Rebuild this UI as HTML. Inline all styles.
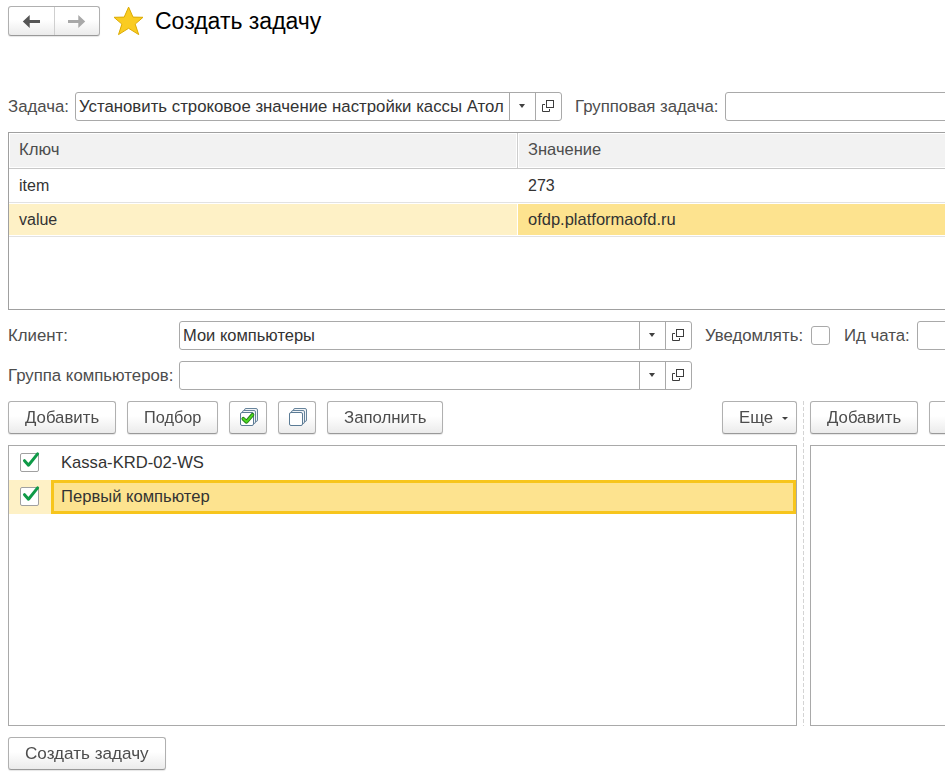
<!DOCTYPE html>
<html><head><meta charset="utf-8">
<style>
*{box-sizing:border-box;margin:0;padding:0}
html,body{width:945px;height:777px;overflow:hidden;background:#fff}
body{position:relative;font-family:"Liberation Sans",sans-serif;font-size:16.8px;color:#4d4d4d}
.a{position:absolute}
.t{position:absolute;white-space:nowrap;line-height:1}
.btn{position:absolute;border:1px solid #b0b0b0;border-bottom-color:#999;border-radius:3px;background:linear-gradient(#ffffff 0%,#ffffff 45%,#ebebeb 100%);box-shadow:0 1px 1px rgba(0,0,0,.1);color:#4d4d4d;white-space:nowrap}
.btn .t{top:8.4px;will-change:transform}
.inp{position:absolute;border:1px solid #a9a9a9;border-radius:3px;background:#fff}
.dd{position:absolute;top:0;bottom:0;border-left:1px solid #a9a9a9}
.tri{position:absolute;width:0;height:0;border-left:3px solid transparent;border-right:3px solid transparent;border-top:4px solid #404040}
.oi{position:absolute;top:7px}
.cb{position:absolute;width:19px;height:19px;border:1px solid #a0a0a0;border-radius:2px;background:#fff}
</style></head><body>

<!-- nav buttons -->
<div class="btn" style="left:8px;top:6px;width:92px;height:30px;"></div>
<div class="a" style="left:54px;top:7px;width:1px;height:28px;background:#cfcfcf"></div>
<svg class="a" style="left:22px;top:14px" width="20" height="15" viewBox="0 0 20 15">
  <path d="M0.8 7.5 L7.7 1.1 L7.7 6 L18 6 L18 9 L7.7 9 L7.7 13.9 Z" fill="#555"/>
</svg>
<svg class="a" style="left:67px;top:14px" width="20" height="15" viewBox="0 0 20 15">
  <path d="M18.2 7.5 L11.3 1.1 L11.3 6 L1 6 L1 9 L11.3 9 L11.3 13.9 Z" fill="#a8a8a8"/>
</svg>
<!-- star -->
<svg class="a" style="left:110px;top:4px" width="36" height="34" viewBox="0 0 36 34"><path d="M18.6 3.1 L23 13.1 L33 13.3 L25.2 20.1 L28.7 30.6 L18.6 24.3 L8.5 30.6 L11.9 20.1 L4 13.3 L14.2 13.1 Z" fill="#facc21" stroke="#dcab02" stroke-width="1" stroke-linejoin="miter"/></svg>
<div class="t" style="left:155px;top:10px;font-size:23px;color:#000">Создать задачу</div>

<!-- Задача row -->
<div class="t" style="left:8px;top:99px">Задача:</div>
<div class="inp" style="left:75px;top:92px;width:487px;height:29px">
  <div class="t" style="left:3px;top:6px;color:#333">Установить строковое значение настройки кассы Атол</div>
  <div class="dd" style="left:433px;width:27px"><div class="tri" style="left:9px;top:11px"></div></div>
  <div class="dd" style="left:459px;width:27px"></div>
  <svg class="oi" style="left:466px" width="13" height="13" viewBox="0 0 13 13"><rect x="4.5" y="0.5" width="7" height="7" fill="none" stroke="#3c3c3c"/><path d="M3 4.5 H0.5 V11.5 H7.5 V9" fill="none" stroke="#3c3c3c"/></svg>
</div>
<div class="t" style="left:575px;top:99px">Групповая задача:</div>
<div class="inp" style="left:725px;top:92px;width:240px;height:29px"></div>

<!-- table -->
<div class="a" style="left:8px;top:132px;width:960px;height:178px;border:1px solid #a0a0a0;background:#fff"></div>
<div class="a" style="left:10px;top:134px;width:506px;height:33px;background:#f2f2f2"></div>
<div class="a" style="left:517px;top:133px;width:1px;height:35px;background:#cdcdcd"></div>
<div class="a" style="left:519px;top:134px;width:440px;height:33px;background:#f2f2f2"></div>
<div class="a" style="left:9px;top:168px;width:940px;height:1px;background:#c8c8c8"></div>
<div class="t" style="left:19px;top:142px">Ключ</div>
<div class="t" style="left:528px;top:141px;font-size:16.5px">Значение</div>
<div class="a" style="left:9px;top:202px;width:940px;height:1px;background:#e2e2e2"></div>
<div class="t" style="left:19px;top:178px;color:#333;font-size:16px">item</div>
<div class="t" style="left:528px;top:178px;color:#333;font-size:16px">273</div>
<div class="a" style="left:9px;top:204px;width:508px;height:31px;background:#fef1c6"></div>
<div class="a" style="left:518px;top:204px;width:430px;height:31px;background:#fde38f"></div>
<div class="a" style="left:9px;top:236px;width:940px;height:1px;background:#e2e2e2"></div>
<div class="t" style="left:19px;top:212px;color:#333;font-size:16px">value</div>
<div class="t" style="left:528px;top:211px;color:#333;font-size:16.5px">ofdp.platformaofd.ru</div>

<!-- Клиент row -->
<div class="t" style="left:8px;top:328px">Клиент:</div>
<div class="inp" style="left:179px;top:321px;width:513px;height:29px">
  <div class="t" style="left:3px;top:5px;color:#333;font-size:16.5px">Мои компьютеры</div>
  <div class="dd" style="left:459px;width:27px"><div class="tri" style="left:9px;top:11px"></div></div>
  <div class="dd" style="left:485px;width:27px"></div>
  <svg class="oi" style="left:492px" width="13" height="13" viewBox="0 0 13 13"><rect x="4.5" y="0.5" width="7" height="7" fill="none" stroke="#3c3c3c"/><path d="M3 4.5 H0.5 V11.5 H7.5 V9" fill="none" stroke="#3c3c3c"/></svg>
</div>
<div class="t" style="left:705px;top:328px">Уведомлять:</div>
<div class="cb" style="left:811px;top:326px;width:19px;height:19px;border-radius:3px;border-color:#a9a9a9"></div>
<div class="t" style="left:844px;top:328px">Ид чата:</div>
<div class="inp" style="left:917px;top:321px;width:60px;height:29px"></div>

<!-- Группа row -->
<div class="t" style="left:8px;top:368px">Группа компьютеров:</div>
<div class="inp" style="left:179px;top:361px;width:513px;height:29px">
  <div class="dd" style="left:459px;width:27px"><div class="tri" style="left:9px;top:11px"></div></div>
  <div class="dd" style="left:485px;width:27px"></div>
  <svg class="oi" style="left:492px" width="13" height="13" viewBox="0 0 13 13"><rect x="4.5" y="0.5" width="7" height="7" fill="none" stroke="#3c3c3c"/><path d="M3 4.5 H0.5 V11.5 H7.5 V9" fill="none" stroke="#3c3c3c"/></svg>
</div>

<!-- buttons -->
<div class="btn" style="left:8px;top:401px;width:108px;height:33px"><div class="t" style="left:16px">Добавить</div></div>
<div class="btn" style="left:127px;top:401px;width:91px;height:33px"><div class="t" style="left:16px;top:7px;font-size:16.3px">Подбор</div></div>
<div class="btn" style="left:229px;top:401px;width:38px;height:33px"></div>
<svg class="a" style="left:239px;top:406px" width="20" height="21" viewBox="0 0 20 21"><rect x="5.5" y="2.5" width="13" height="13" rx="1.5" fill="#f1f4f7" stroke="#67849c"/><rect x="3.5" y="4.5" width="13" height="13" rx="1.5" fill="#f1f4f7" stroke="#67849c"/><rect x="1.5" y="6.5" width="13" height="13" rx="1.5" fill="#fff" stroke="#5b7b95"/><path d="M4.3 12.8 L7.5 15.8 L13.5 8.8" fill="none" stroke="#237a17" stroke-width="3.7" stroke-linecap="round" stroke-linejoin="round"/><path d="M4.3 12.8 L7.5 15.8 L13.5 8.8" fill="none" stroke="#4cd820" stroke-width="2" stroke-linecap="round" stroke-linejoin="round"/></svg>
<div class="btn" style="left:278px;top:401px;width:38px;height:33px"></div>
<svg class="a" style="left:288px;top:406px" width="20" height="21" viewBox="0 0 20 21"><rect x="5.5" y="2.5" width="13" height="13" rx="1.5" fill="#f1f4f7" stroke="#67849c"/><rect x="3.5" y="4.5" width="13" height="13" rx="1.5" fill="#f1f4f7" stroke="#67849c"/><rect x="1.5" y="6.5" width="13" height="13" rx="1.5" fill="#fff" stroke="#5b7b95"/></svg>
<div class="btn" style="left:327px;top:401px;width:116px;height:33px"><div class="t" style="left:16px">Заполнить</div></div>
<div class="btn" style="left:722px;top:401px;width:75px;height:33px"><div class="t" style="left:16px">Еще</div><div class="tri" style="left:59px;top:15px;border-width:3px 3px 0 3px"></div></div>
<div class="a" style="left:803px;top:401px;width:1px;height:325px;background:repeating-linear-gradient(to bottom,#d4d4d4 0,#d4d4d4 4px,transparent 4px,transparent 6px)"></div>
<div class="btn" style="left:810px;top:401px;width:108px;height:33px"><div class="t" style="left:16px">Добавить</div></div>
<div class="btn" style="left:929px;top:401px;width:60px;height:33px"></div>

<!-- list -->
<div class="a" style="left:8px;top:445px;width:789px;height:281px;border:1px solid #a9a9a9;background:#fff"></div>
<div class="a" style="left:9px;top:480px;width:42px;height:34px;background:#fef1c6"></div>
<div class="a" style="left:51px;top:480px;width:745px;height:34px;background:#fde38f;border:3px solid #f7c51c"></div>
<div class="t" style="left:61px;top:455px;color:#333;font-size:16.6px">Kassa-KRD-02-WS</div>
<div class="t" style="left:61px;top:489px;color:#333;font-size:16.6px">Первый компьютер</div>
<div class="cb" style="left:20px;top:453px"></div>
<div class="cb" style="left:20px;top:487px"></div>
<svg class="a" style="left:20px;top:453px;overflow:visible" width="20" height="20" viewBox="0 0 20 20"><path d="M4.5 7.7 L8.5 12.2 L17.6 0.9" fill="none" stroke="#0f9a47" stroke-width="3" stroke-linecap="round" stroke-linejoin="round"/></svg>
<svg class="a" style="left:20px;top:487px;overflow:visible" width="20" height="20" viewBox="0 0 20 20"><path d="M4.5 7.7 L8.5 12.2 L17.6 0.9" fill="none" stroke="#0f9a47" stroke-width="3" stroke-linecap="round" stroke-linejoin="round"/></svg>
<div class="a" style="left:810px;top:445px;width:160px;height:281px;border:1px solid #a9a9a9;background:#fff"></div>

<div class="btn" style="left:8px;top:737px;width:158px;height:33px"><div class="t" style="left:16px;top:7.4px;font-size:17.1px">Создать задачу</div></div>

</body></html>
